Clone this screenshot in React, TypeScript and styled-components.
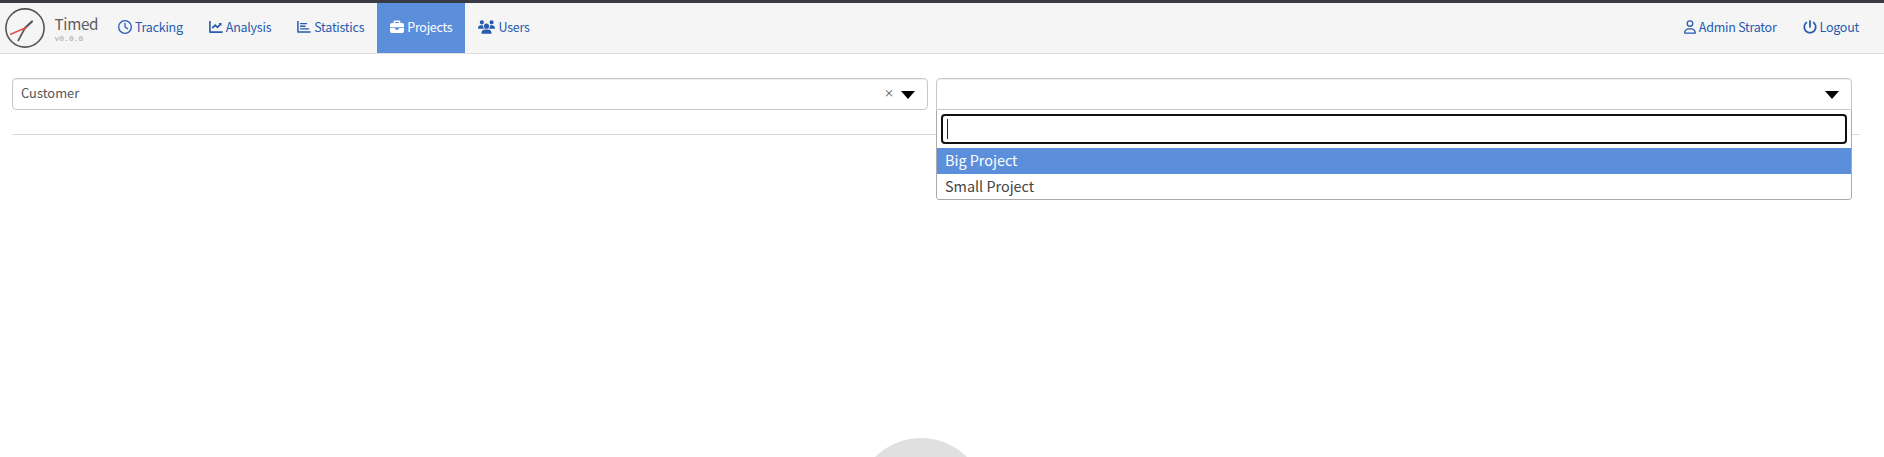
import React from "react";
import styled, { createGlobalStyle } from "styled-components";
import { FaRegClock, FaUsers, FaRegUser, FaPowerOff } from "react-icons/fa6";

const GlobalStyle = createGlobalStyle`
  * { box-sizing: border-box; }
  body {
    margin: 0;
    background: #fff;
    color: #555;
    font-family: "Noto Sans CJK JP", "Noto Sans", sans-serif;
    font-size: 12.9px;
    overflow: hidden;
  }
`;

const Page = styled.div`
  height: 457px;
  overflow: hidden;
  display: flex;
  flex-direction: column;
`;

const Header = styled.header`
  flex: none;
  height: 54px;
  display: flex;
  border-top: 3px solid #393a43;
  border-bottom: 1px solid #dfdfdf;
  background: #f5f5f5;
`;

const Brand = styled.div`
  display: flex;
  flex: none;
  width: 105px;
  padding: 5px 0 0 5px;
  gap: 9.5px;
`;

const BrandText = styled.div`
  padding-top: 4px;
`;

const BrandName = styled.div`
  font-size: 15.2px;
  line-height: 22px;
  letter-spacing: -0.3px;
  color: #5c5c5c;
`;

const Version = styled.div`
  font: 8px/10px "Liberation Mono", monospace;
  color: #a2a2a2;
`;

const Nav = styled.nav`
  display: flex;
  flex: 1;
`;

const NavItem = styled.a<{ $active?: boolean; $iconWidth?: number }>`
  display: flex;
  align-items: center;
  gap: 3px;
  padding: 0 13px 2px;
  height: 50px;
  font-size: 12.5px;
  line-height: 20px;
  letter-spacing: -0.25px;
  white-space: nowrap;
  color: ${(p) => (p.$active ? "#fff" : "#265bb0")};
  background: ${(p) => (p.$active ? "#5b8edb" : "transparent")};
  svg { width: ${(p) => p.$iconWidth ?? 14}px; height: 14px; flex: none; }
`;

const Account = styled.div`
  display: flex;
  padding-right: 12px;
`;

const Main = styled.main`
  padding: 24px 24px 0 12px;
`;

const Filters = styled.div`
  display: grid;
  grid-template-columns: 916px 916px;
  gap: 8px;
`;

const SelectWrap = styled.div`
  position: relative;
`;

const Trigger = styled.div<{ $open?: boolean }>`
  display: flex;
  align-items: center;
  height: 32px;
  padding: 0 12px 0 8px;
  border: 1px solid #c8c8c8;
  border-radius: ${(p) => (p.$open ? "4px 4px 0 0" : "4px")};
  box-shadow: inset 0 1px 1px #eee;
  line-height: 20px;
`;

const Value = styled.span`
  flex: 1;
  padding-bottom: 2px;
`;

const Clear = styled.span`
  margin-right: 7px;
  padding-bottom: 2px;
  font-size: 10px;
  font-weight: 500;
`;

const Caret = styled.span`
  margin-top: 2px;
  border: 7px solid transparent;
  border-top: 8px solid #000;
  border-bottom: 0;
`;

const Dropdown = styled.div`
  position: absolute;
  z-index: 2;
  top: 32px;
  left: 0;
  width: 100%;
  border: 1px solid #aaa;
  border-top: 0;
  border-radius: 0 0 4px 4px;
  background: #fff;
  overflow: hidden;
`;

const SearchRow = styled.div`
  padding: 4px 4px;
  height: 38px;
`;

const Search = styled.div`
  height: 30px;
  border: 2px solid #101010;
  border-radius: 4px;
  padding: 3px 4px;
`;

const TextCursor = styled.div`
  width: 1px;
  height: 20px;
  background: #222;
`;

const Option = styled.div<{ $highlighted?: boolean }>`
  height: ${(p) => (p.$highlighted ? 26 : 25)}px;
  padding: 0 8px;
  font-size: 14.4px;
  line-height: 23px;
  color: ${(p) => (p.$highlighted ? "#fff" : "#444")};
  background: ${(p) => (p.$highlighted ? "#5b8edb" : "#fff")};
`;

const Divider = styled.div`
  height: 1px;
  margin-top: 24px;
  background: #d8d8d8;
`;

const EmptyMark = styled.div`
  width: 130px;
  height: 130px;
  margin: 303px 0 0 844px;
  border-radius: 50%;
  background: #e0e0e0;
`;

const Logo = () => (
  <svg width="40" height="40" viewBox="0 0 40 40" fill="none">
    <circle cx="20" cy="20" r="19.1" stroke="#555" strokeWidth="1.6" />
    <path d="M13 33 20 20" stroke="#555" strokeWidth="1.6" />
    <path d="M20 20 27 13.5" stroke="#555" strokeWidth="2.2" strokeLinecap="round" />
    <path d="M5 26.5 22 19.3" stroke="#e0524b" strokeWidth="1.6" />
  </svg>
);

const LineChartIcon = () => (
  <svg viewBox="0 0 14 14" fill="none" stroke="currentColor" strokeWidth="1.6">
    <path d="M.9 1v11.1H13.6" strokeLinejoin="round" />
    <path d="m3.2 8.2 3-3.1 2.3 2.2 3.2-3.4" strokeWidth="1.7" />
    <path d="M9.5 3h3v3z" fill="currentColor" stroke="none" />
  </svg>
);

const BarChartIcon = () => (
  <svg viewBox="0 0 14 14" fill="none" stroke="currentColor" strokeWidth="1.5">
    <path d="M.9 1v11.1H13.6" strokeLinejoin="round" />
    <path d="M3.5 3.6h6M3.5 6.2h4.5M3.5 8.9h8" strokeWidth="1.4" strokeLinecap="round" />
  </svg>
);

const BriefcaseIcon = () => (
  <svg viewBox="0 0 14 14" fill="currentColor">
    <path
      fillRule="evenodd"
      d="M3.6 3V1.8Q3.6.4 5 .4h4q1.4 0 1.4 1.4V3H12q2 0 2 2v2.2H0V5q0-2 2-2zm1.5 0h3.8V1.9H5.1z"
    />
    <path d="M0 8h5v.4q0 1.3 1.3 1.3h1.4q1.3 0 1.3-1.3V8h5v3.3q0 1.7-1.7 1.7H1.7Q0 13 0 11.3z" />
  </svg>
);

export default function App() {
  return (
    <Page>
      <GlobalStyle />
      <Header>
        <Brand>
          <Logo />
          <BrandText>
            <BrandName>Timed</BrandName>
            <Version>v0.0.0</Version>
          </BrandText>
        </Brand>
        <Nav>
          <NavItem><FaRegClock />Tracking</NavItem>
          <NavItem><LineChartIcon />Analysis</NavItem>
          <NavItem><BarChartIcon />Statistics</NavItem>
          <NavItem $active><BriefcaseIcon />Projects</NavItem>
          <NavItem $iconWidth={17}><FaUsers />Users</NavItem>
        </Nav>
        <Account>
          <NavItem $iconWidth={12}><FaRegUser />Admin Strator</NavItem>
          <NavItem><FaPowerOff />Logout</NavItem>
        </Account>
      </Header>
      <Main>
        <Filters>
          <Trigger>
            <Value>Customer</Value>
            <Clear>×</Clear>
            <Caret />
          </Trigger>
          <SelectWrap>
            <Trigger $open>
              <Value />
              <Caret />
            </Trigger>
            <Dropdown>
              <SearchRow>
                <Search><TextCursor /></Search>
              </SearchRow>
              <Option $highlighted>Big Project</Option>
              <Option>Small Project</Option>
            </Dropdown>
          </SelectWrap>
        </Filters>
        <Divider />
        <EmptyMark />
      </Main>
    </Page>
  );
}
